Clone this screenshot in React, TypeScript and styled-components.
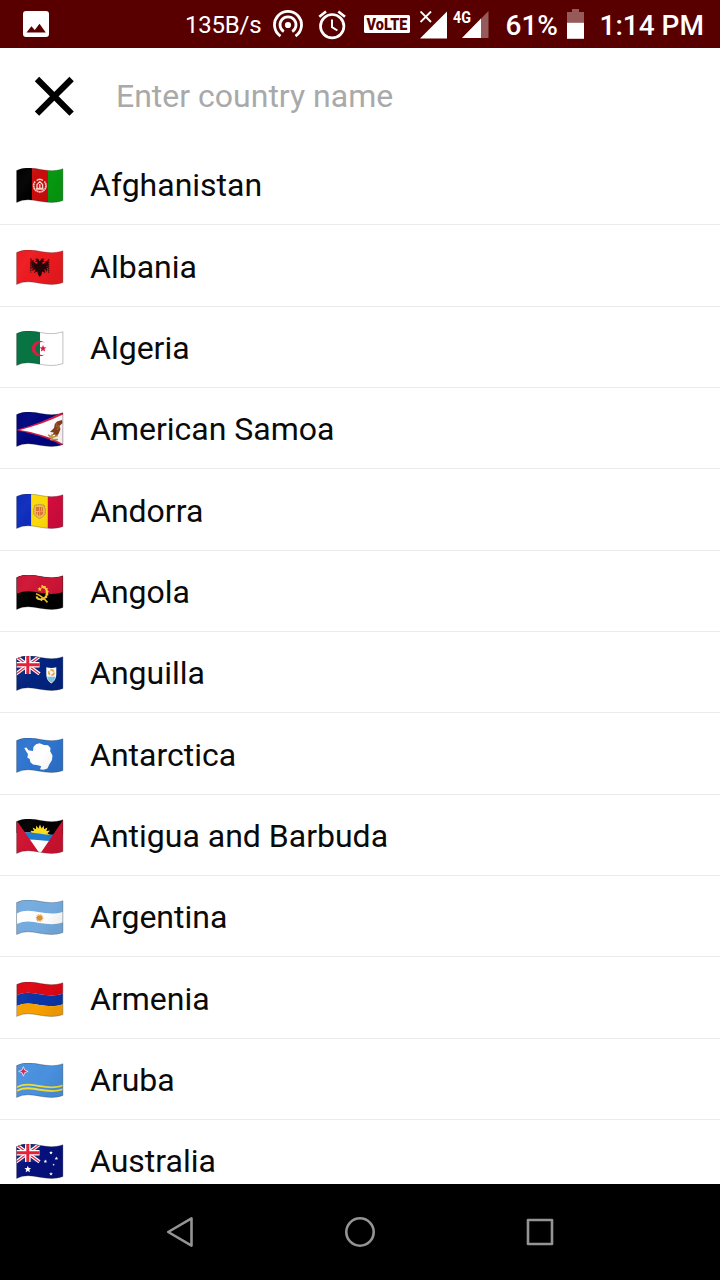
import React from 'react';
import styled, { createGlobalStyle } from 'styled-components';

const GlobalStyle = createGlobalStyle`
  * { box-sizing: border-box; }
  body { margin: 0; background: #fff; }
`;

const Screen = styled.div`
  width: 720px;
  height: 1280px;
  display: flex;
  flex-direction: column;
  overflow: hidden;
  background: #fff;
  font-family: Roboto, sans-serif;
`;

const StatusBar = styled.header`
  height: 48px;
  flex: none;
  display: flex;
  align-items: center;
  padding: 2px 14px 0 22px;
  background: #580000;
  color: #fff;
`;

const StatusIcon = styled.svg<{ $gap: number }>`
  flex: none;
  display: block;
  margin-left: ${(p) => p.$gap}px;
`;

const StatusText = styled.span<{ $width: number; $gap: number; $large?: boolean }>`
  flex: none;
  width: ${(p) => p.$width}px;
  margin-left: ${(p) => p.$gap}px;
  padding-top: ${(p) => (p.$large ? 2 : 0)}px;
  font-size: ${(p) => (p.$large ? 28 : 24)}px;
  font-weight: ${(p) => (p.$large ? 500 : 400)};
  letter-spacing: ${(p) => (p.$large ? 0 : -0.2)}px;
  line-height: 44px;
  white-space: nowrap;
`;

const SearchBar = styled.div`
  height: 96px;
  flex: none;
  display: flex;
  align-items: center;
  padding-left: 34px;
`;

const CloseButton = styled.button`
  width: 40px;
  height: 40px;
  padding: 0;
  border: 0;
  background: none;

  svg { display: block; }
`;

const SearchInput = styled.input`
  width: 560px;
  margin-left: 42px;
  padding: 0;
  border: 0;
  outline: 0;
  background: none;
  font: 400 32px Roboto, sans-serif;

  &::placeholder { color: #a9a9a9; opacity: 1; }
`;

const List = styled.ul`
  flex: 1;
  min-height: 0;
  margin: 0;
  padding: 0;
  overflow: hidden;
  list-style: none;
`;

const Row = styled.li`
  height: 81.35px;
  display: flex;
  align-items: center;
  padding: 2.2px 0 0 16px;
  border-bottom: 1.4px solid #eaeaea;
`;

const FlagSvg = styled.svg`
  flex: none;
  display: block;
  width: 48px;
  height: 36px;
  margin-top: 2px;
`;

const CountryName = styled.span`
  margin-left: 26px;
  font-size: 32px;
  line-height: 40px;
  color: #0a0a0a;
  white-space: nowrap;
`;

const NavBar = styled.nav`
  height: 96px;
  flex: none;
  display: flex;
  align-items: center;
  justify-content: center;
  gap: 140px;
  background: #000;

  svg { display: block; }
`;

/* The waving top edge, shifted down by y. */
const edge = (y: number) => `M0.6 ${y + 2.4}C16 ${y - 5.4} 29 ${y + 7} 46.9 ${y + 0.6}`;
const band = (a: number, b: number) =>
  `${edge(a)}V${b + 0.6}C29 ${b + 7} 16 ${b - 5.4} 0.6 ${b + 2.4}Z`;
const OUTLINE = band(0.2, 32);

const Star = ({ x, y, r, fill = '#fff' }: { x: number; y: number; r: number; fill?: string }) => (
  <polygon
    fill={fill}
    points={Array.from({ length: 10 }, (_, i) => {
      const a = (i * Math.PI) / 5 - Math.PI / 2;
      const q = i % 2 ? r * 0.45 : r;
      return `${(x + q * Math.cos(a)).toFixed(2)},${(y + q * Math.sin(a)).toFixed(2)}`;
    }).join(' ')}
  />
);

const UnionJack = () => (
  <g transform="translate(0 -0.6)">
    <path d="M0 1H23.5V18.5H0Z" fill="#10247c" />
    <path d="M0 1L23.5 18.5M23.5 1L0 18.5" stroke="#fff" strokeWidth="3.6" />
    <path d="M0 1L23.5 18.5M23.5 1L0 18.5" stroke="#e32945" strokeWidth="1.2" />
    <path d="M11.8 0V18.5M0 9.4H23.5" stroke="#fff" strokeWidth="5.6" />
    <path d="M11.8 0V18.5M0 9.4H23.5" stroke="#e51c36" strokeWidth="3" />
  </g>
);

const art: Record<string, React.ReactNode> = {
  Afghanistan: (
    <>
      <path d="M0 0H16V36H0Z" fill="#000" />
      <path d="M16 0H32V36H16Z" fill="#c90b0b" />
      <path d="M32 0H48V36H32Z" fill="#069a10" />
      <path d="M19.2 13.5A6.2 6.2 0 1 0 28.4 13.5" fill="none" stroke="#f7cfc8" strokeWidth="1.7" strokeDasharray="1.8 .4" />
      <path d="M20.6 12.6A5 5 0 0 1 27 12.6M21 20.4V16.6L23.8 13.6L26.6 16.6V20.4ZM20 21H27.6M23.8 16V20.4" fill="none" stroke="#f8d4cd" strokeWidth="1.3" />
    </>
  ),
  Albania: (
    <>
      <path d="M0 0H48V36H0Z" fill="#ec1a1f" />
      <path d="M23.8 11.6L22 8.5L18.8 9L20.8 10.3L19 11.2L22 12.8L20.3 14L15 9.3L15.6 12L14.2 12.2L16 14L14.5 15L16.4 16.2L14.8 17.7L17.2 18L15.8 20.4L19.5 19.3L18 23L21.5 21.5L22 24.5L23.8 27L25.6 24.5L26 21.5L29.5 23L28.2 19.3L32 20.6L30.6 18.2L32.8 17.8L31.2 16.4L33 15.3L31.6 14.2L33.3 12.4L31.9 12L32.6 9.6L27.3 14L25.6 12.8L28.6 11.2L26.8 10.3L28.8 9L25.6 8.5Z" fill="#240507" />
      <path d="M14.8 8.5V22.5M32.6 9V23M17.2 10V21M30.3 11V21.5" fill="none" stroke="#4c0809" strokeWidth="1.3" strokeDasharray="1.6 .6" />
    </>
  ),
  Algeria: (
    <>
      <path d="M0 0H24V36H0Z" fill="#087343" />
      <path d="M24 0H48V36H24Z" fill="#fff" />
      <path d="M29.2 12.2A7.8 7.8 0 1 0 29.2 22.9A6.3 6.3 0 1 1 29.2 12.2Z" fill="#d81e42" />
      <Star x={27} y={17.6} r={3.6} fill="#d81e42" />
    </>
  ),
  'American Samoa': (
    <>
      <path d="M0 0H48V36H0Z" fill="#00057d" />
      <path d="M0 18C18 13 34 7 48 -1V35C34 26 18 22 0 18Z" fill="#d31c48" />
      <path d="M4 18C18 14.2 34 9 48 2V32.6C34 24 18 20.6 4 18Z" fill="#fff" />
      <path d="M46 8L41 9.5L38.8 12L38 16L34 20L38 20.5L36 23L39.5 22.5L39 25L42.5 22L44.5 17L43.5 14L46.5 11Z" fill="#84401e" />
      <path d="M41 11L40 15L43 13.4L41 18L44 15.5" fill="none" stroke="#a86037" strokeWidth="1" />
      <path d="M32 23L37 25.2L42 23.6M34 27.6H42M36 22V28.4M33 25H37" fill="none" stroke="#c19b43" strokeWidth="1.5" />
    </>
  ),
  Andorra: (
    <>
      <path d="M0 0H15.4V36H0Z" fill="#0c2cbb" />
      <path d="M15.4 0H31.7V36H15.4Z" fill="#fdda08" />
      <path d="M31.7 0H48V36H31.7Z" fill="#d20c3d" />
      <path d="M18.2 12C19 10.4 20.6 11.5 23.5 10.3C26.4 11.5 28 10.4 28.8 12C28 14 30.2 15 29.2 17.5C30 21 27 22.5 23.5 24.7C20 22.5 17 21 17.8 17.5C16.8 15 19 14 18.2 12Z" fill="#e9bd50" stroke="#b88943" strokeWidth="1" strokeDasharray="1.6 .5" />
      <path d="M20 13H23.3V17H20ZM23.6 17.4H27V20L23.6 22Z" fill="#db752f" />
      <path d="M24.5 13V17M26.3 13V17M20.7 18V20.5M22.5 18V21.5" stroke="#d95c2c" strokeWidth=".9" />
    </>
  ),
  Angola: (
    <>
      <path d="M0 0H48V36H0Z" fill="#000" />
      <path d={band(-5, 16.4)} fill="#ce1435" />
      <path d="M25.6 11.5C33.5 12 32.5 24.4 25 24.4C22.4 24.4 20.8 22.8 20.6 21.4" fill="none" stroke="#f4cf32" strokeWidth="2" />
      <path d="M25.6 11.5C33.5 12 32.5 24.4 25 24.4" fill="none" stroke="#f4cf32" strokeWidth="3.2" strokeDasharray="1 1.6" />
      <path d="M20 18.8C24 20 27.5 23 31.5 27.4" fill="none" stroke="#e9bd30" strokeWidth="1.6" />
      <Star x={23.8} y={14.2} r={2.5} fill="#f9d232" />
    </>
  ),
  Anguilla: (
    <>
      <path d="M0 0H48V36H0Z" fill="#02237f" />
      <UnionJack />
      <path d="M30.3 11.2Q35.3 12.6 40.3 11.2V18C40.3 23 38 25.6 35.3 27.4C32.6 25.6 30.3 23 30.3 18Z" fill="#fff" />
      <path d="M31 20.8H39.6C39 23.4 37.5 25.3 35.3 26.8C33.1 25.3 31.6 23.4 31 20.8Z" fill="#83c7e6" />
      <circle cx="35.4" cy="16.6" r="2.6" fill="none" stroke="#eeb13d" strokeWidth="1.8" strokeDasharray="4 1.4" />
    </>
  ),
  Antarctica: (
    <>
      <path d="M0 0H48V36H0Z" fill="#2e74cf" />
      <path d="M8.3 10L10.5 9.5L12.5 12.2L17 13L17.4 9L20 6.2L23.5 5.3L28 7L32 7.2L34.5 10L34.2 13.3L36.5 17.5L36 22L33.3 26.5L31.4 30.5L27.5 31.8L24 31.2L25.2 28.2L22 27.2L17 26.5L14.4 24.3L13.7 21L11.3 19.5L12 16.2L10.3 13.5Z" fill="#fff" />
    </>
  ),
  'Antigua and Barbuda': (
    <>
      <path d="M0 0H48V36H0Z" fill="#fff" />
      <path d="M0 0H48V15.5C36 18 20 12 0 14Z" fill="#000" />
      <path d="M15.6 14L14.4 11.8L18 11.9L16.6 8.4L19.9 10.2L20.3 6.4L22.4 9.5L24 5.4L25.6 9.5L27.7 6.4L28.1 10.2L31.4 8.4L30.4 12L34 11.6L31.5 14.5L34 16H14Z" fill="#fcdb22" />
      <path d="M6 13.6C20 12.6 28 17 42 15.3V21.6C28 23 21 19.5 6 20.7Z" fill="#1d7cd2" />
      <path d="M0 0.5L24 35L48 -0.5V36H0Z" fill="#cd1230" />
    </>
  ),
  Argentina: (
    <>
      <path d="M0 0H48V36H0Z" fill="#74abdf" />
      <path d={band(11.1, 21.7)} fill="#fff" />
      <circle cx="23.6" cy="18" r="2.8" fill="#d9912d" />
      <circle cx="23.6" cy="18" r="3.3" fill="none" stroke="#d8a050" strokeWidth="1.1" strokeDasharray="1 .7" />
    </>
  ),
  Armenia: (
    <>
      <path d={band(-4, 11)} fill="#db0714" />
      <path d={band(11, 21.7)} fill="#0a35a5" />
      <path d={band(21.7, 38)} fill="#f8a000" />
    </>
  ),
  Aruba: (
    <>
      <path d="M0 0H48V36H0Z" fill="#4990de" />
      <path d={band(21, 22.7)} fill="#f2de35" />
      <path d={band(24.6, 26.4)} fill="#f2de35" />
      <path d="M7.4 3.7L8.7 7.1L12.1 8.4L8.7 9.7L7.4 13.1L6.1 9.7L2.7 8.4L6.1 7.1Z" fill="#d71e51" stroke="#f2eaf8" strokeWidth=".8" />
    </>
  ),
  Australia: (
    <>
      <path d="M0 0H48V36H0Z" fill="#06107b" />
      <UnionJack />
      <Star x={11.8} y={25.3} r={3.6} />
      <Star x={29.4} y={17.4} r={1.9} />
      <Star x={35} y={8.8} r={1.9} />
      <Star x={40.4} y={14.5} r={1.9} />
      <Star x={37.6} y={20.8} r={1.2} />
      <Star x={35} y={29.9} r={2} />
    </>
  ),
};

const Flag = ({ name }: { name: string }) => (
  <FlagSvg viewBox="0 0 48 36" aria-hidden="true">
    <defs>
      <clipPath id="wave"><path d={OUTLINE} /></clipPath>
      <linearGradient id="sheen" x1="0" y1="0" x2="1" y2="0.5">
        <stop offset="0" stopColor="#fff" stopOpacity="0" />
        <stop offset=".3" stopColor="#fff" stopOpacity=".03" />
        <stop offset=".65" stopColor="#000" stopOpacity="0" />
        <stop offset="1" stopColor="#000" stopOpacity=".06" />
      </linearGradient>
    </defs>
    <g clipPath="url(#wave)">
      {art[name]}
      {name !== 'Algeria' && <path d={OUTLINE} fill="url(#sheen)" />}
    </g>
    <path d={OUTLINE} fill="none" stroke="#202020" strokeOpacity=".28" strokeWidth="1" />
  </FlagSvg>
);

const countries = Object.keys(art);

export default function App() {
  return (
    <Screen>
      <GlobalStyle />
      <StatusBar>
        <StatusIcon $gap={1} width="26" height="28" viewBox="0 0 26 28">
          <path fillRule="evenodd" fill="#fff" d="M3 0H23Q26 0 26 3V23Q26 26 23 26H3Q0 26 0 23V3Q0 0 3 0ZM3.5 21.5H22.8L16.5 12.8L11.8 19L8.4 15.2Z" />
        </StatusIcon>
        <StatusText $gap={136} $width={88}>135B/s</StatusText>
        <StatusIcon $gap={0} width="30" height="30" viewBox="0 0 30 30" fill="none" stroke="#fff" strokeWidth="2.8">
          <path d="M7.5 26.1A13.5 13.5 0 1 1 22.5 26.1" />
          <path d="M10.8 21.6A8 8 0 1 1 19.2 21.6" />
          <circle cx="15" cy="15" r="3.1" fill="#fff" stroke="none" />
        </StatusIcon>
        <StatusIcon $gap={15} width="28" height="30" viewBox="0 0 28 30" fill="none" stroke="#fff" strokeWidth="2.7">
          <circle cx="14.2" cy="16.2" r="11.7" />
          <path d="M1.3 6.8L8 1.5M27 6.8L20.3 1.5" />
          <path d="M14 9.5V17.2L19.4 20.5" strokeWidth="2" />
        </StatusIcon>
        <StatusIcon $gap={18} width="46" height="28" viewBox="0 -4 46 28">
          <rect x="0" y="0" width="46" height="18" rx="1.5" fill="#fff" />
          <text x="2.6" y="14.6" textLength="40.8" lengthAdjust="spacingAndGlyphs" fontFamily="Roboto, sans-serif" fontSize="16" fontWeight="900" fill="#580000">VoLTE</text>
        </StatusIcon>
        <StatusIcon $gap={10} width="28" height="28" viewBox="0 0 28 28">
          <path d="M0 27.5H27V0.5Z" fill="#fff" />
          <path d="M0.5 0.5L11 11M11 0.5L0.5 11" stroke="#580000" strokeWidth="5" />
          <path d="M0.5 0.5L11 11M11 0.5L0.5 11" stroke="#fff" strokeWidth="1.9" />
        </StatusIcon>
        <StatusIcon $gap={5} width="37" height="36" viewBox="0 -3 37 36">
          <path d="M9 28H35.5V1Z" fill="#965a5a" />
          <path d="M9 28H28V8.5Z" fill="#fff" />
          <path d="M0 0H18.6V13H0Z" fill="#580000" />
          <text x="0" y="12.6" textLength="18" lengthAdjust="spacingAndGlyphs" fontFamily="Roboto, sans-serif" fontSize="17" fontWeight="700" fill="#fff">4G</text>
        </StatusIcon>
        <StatusText $large $gap={15.5} $width={61.5}>61%</StatusText>
        <StatusIcon $gap={0} width="17" height="32" viewBox="0 0 17 32">
          <path d="M5 0H12V3H17V14H0V3H5Z" fill="#965a5a" />
          <path d="M0 13.8H17V29.8H0Z" fill="#fff" />
        </StatusIcon>
        <StatusText $large $gap={15.5} $width={105.5}>1:14 PM</StatusText>
      </StatusBar>
      <SearchBar>
        <CloseButton aria-label="Close">
          <svg width="40" height="40" viewBox="0 0 40 40">
            <path d="M3 3L37.6 37.6M37.6 3L3 37.6" stroke="#000" strokeWidth="6.2" />
          </svg>
        </CloseButton>
        <SearchInput placeholder="Enter country name" />
      </SearchBar>
      <List>
        {countries.map((name) => (
          <Row key={name}>
            <Flag name={name} />
            <CountryName>{name}</CountryName>
          </Row>
        ))}
      </List>
      <NavBar>
        <svg width="40" height="40" viewBox="0 0 40 40" fill="none" stroke="#949494" strokeWidth="2.6" strokeLinejoin="round">
          <path d="M31.5 6.4V33.6L8.2 20Z" />
        </svg>
        <svg width="40" height="40" viewBox="0 0 40 40" fill="none" stroke="#949494" strokeWidth="2.6">
          <circle cx="20" cy="20" r="13.7" />
        </svg>
        <svg width="40" height="40" viewBox="0 0 40 40" fill="none" stroke="#949494" strokeWidth="2.6" strokeLinejoin="round">
          <path d="M8 8H32V32H8Z" />
        </svg>
      </NavBar>
    </Screen>
  );
}
